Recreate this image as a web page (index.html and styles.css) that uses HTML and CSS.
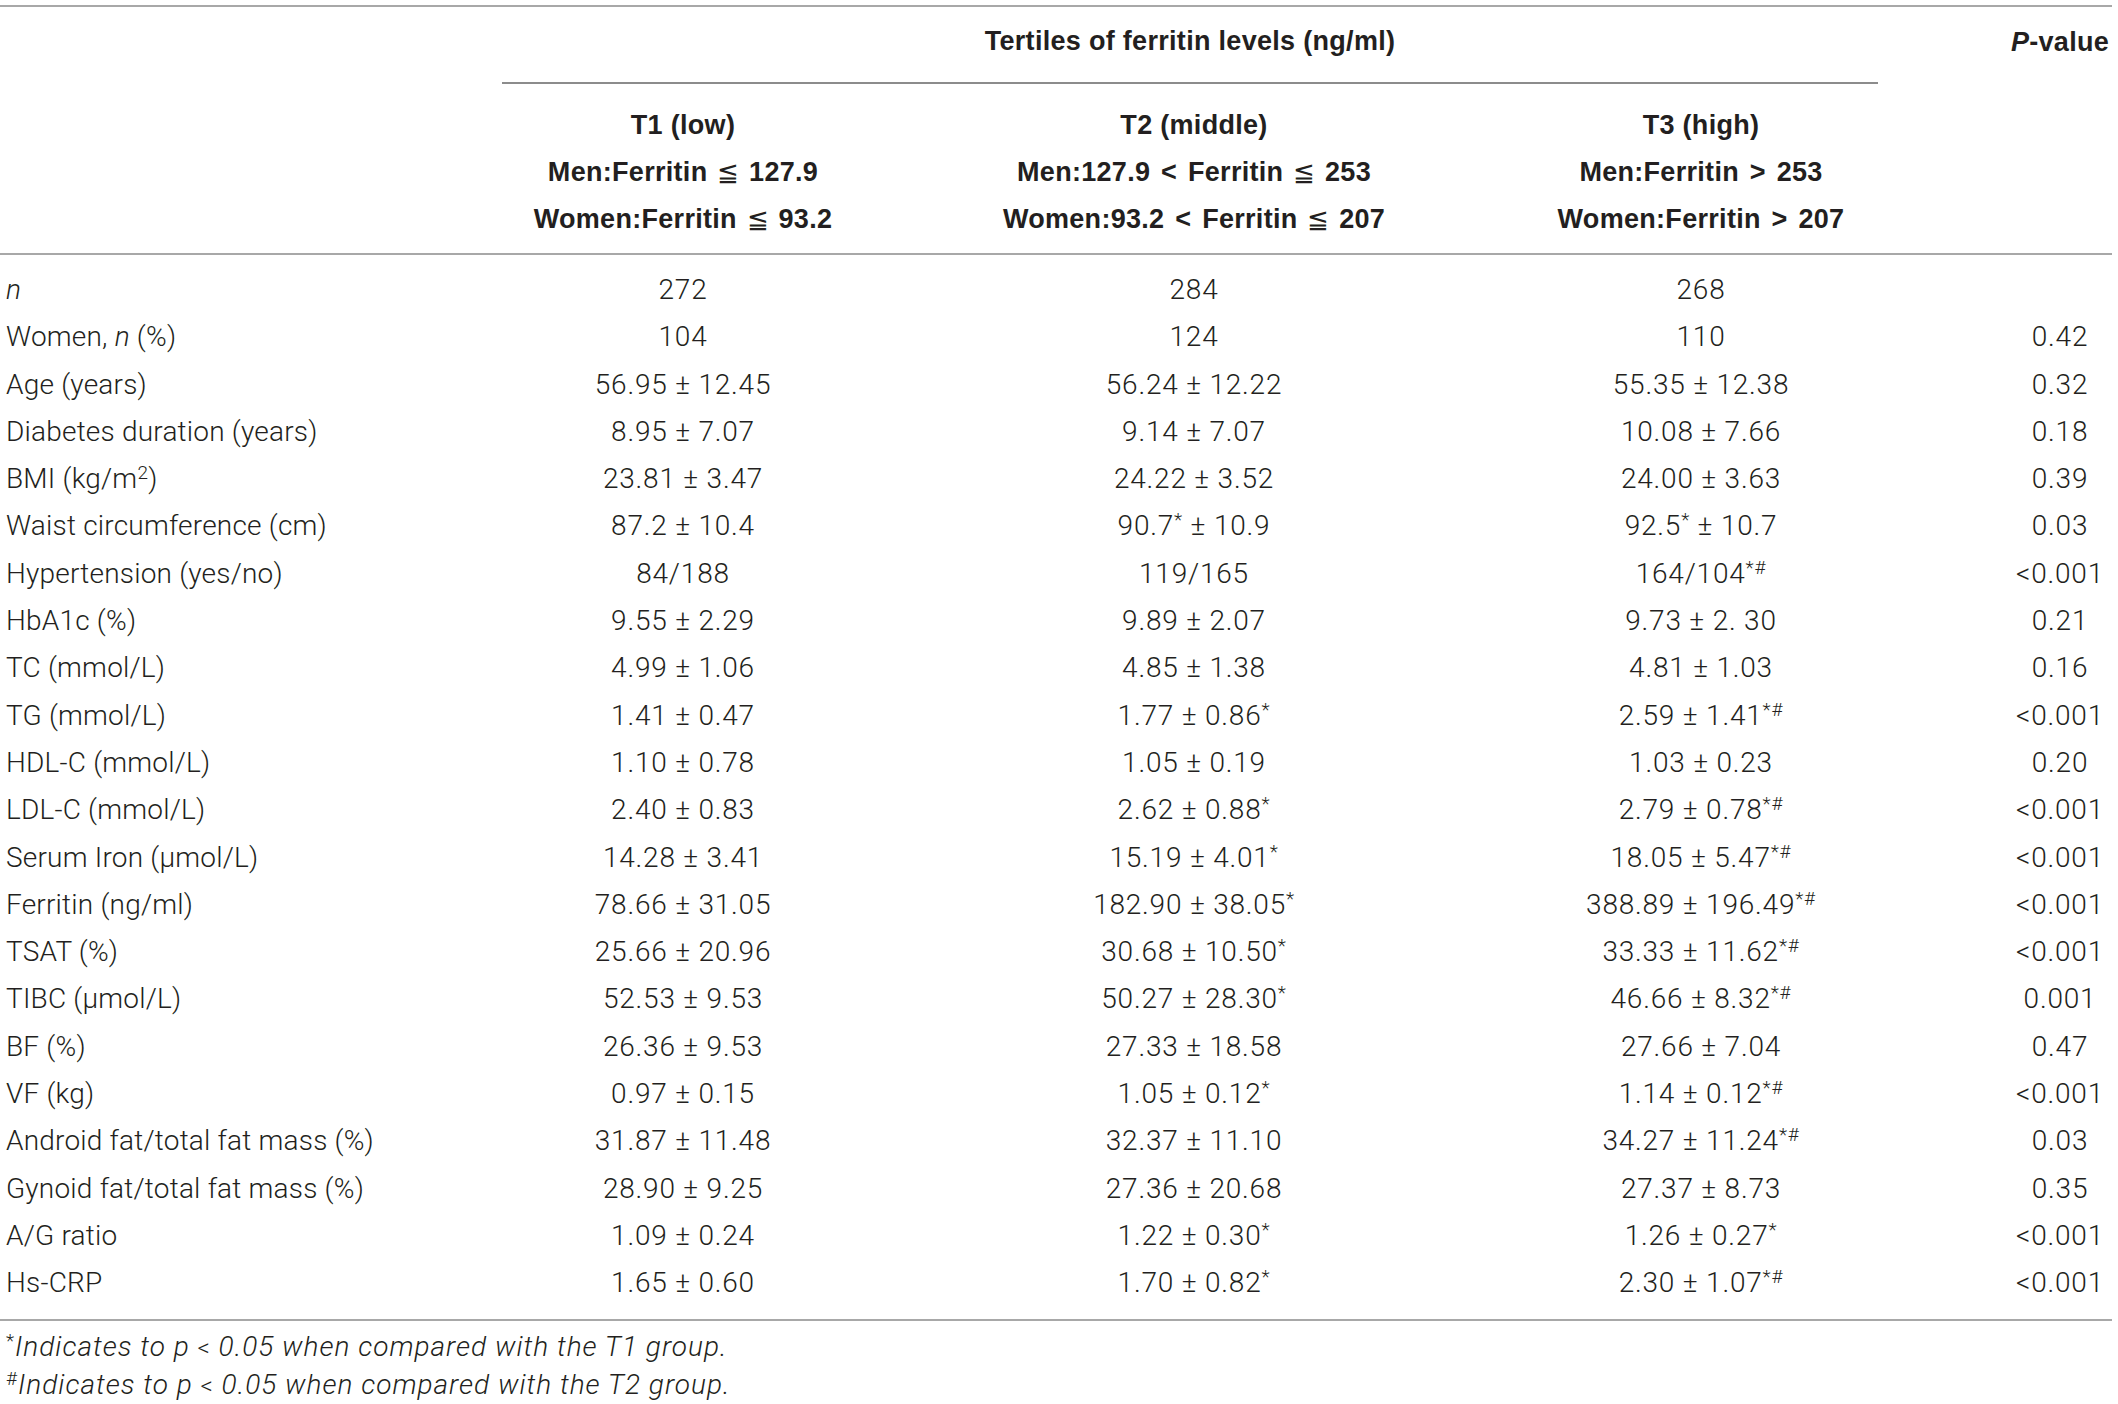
FILE: index.html
```html
<!DOCTYPE html>
<html lang="en">
  <head>
    <meta charset="UTF-8" />
    <title>Ferritin tertiles</title>
    <link rel="stylesheet" href="styles.css">
  </head>
  <body>
    <table class="data">
      <colgroup>
        <col class="c-label" />
        <col class="c-t1" />
        <col class="c-t2" />
        <col class="c-t3" />
        <col class="c-p" />
      </colgroup>
      <thead>
        <tr class="span-row">
          <th></th>
          <th colspan="3" class="spanner">Tertiles of ferritin levels (ng/ml)</th>
          <th class="p"><i>P</i>-value</th>
        </tr>
        <tr class="group-row">
          <th></th>
          <th>T1 (low)<br />Men:Ferritin <span class="sym">≦</span> 127.9<br />Women:Ferritin <span class="sym">≦</span> 93.2</th>
          <th>T2 (middle)<br />Men:127.9 <span class="op">&lt;</span> Ferritin <span class="sym">≦</span> 253<br />Women:93.2 <span class="op">&lt;</span> Ferritin <span class="sym">≦</span> 207</th>
          <th>T3 (high)<br />Men:Ferritin <span class="op">&gt;</span> 253<br />Women:Ferritin <span class="op">&gt;</span> 207</th>
          <th class="p"></th>
        </tr>
      </thead>
      <tbody>
        <tr><td><i>n</i></td><td>272</td><td>284</td><td>268</td><td class="p"></td></tr>
        <tr><td>Women, <i>n</i> (%)</td><td>104</td><td>124</td><td>110</td><td class="p">0.42</td></tr>
        <tr><td>Age (years)</td><td>56.95 ± 12.45</td><td>56.24 ± 12.22</td><td>55.35 ± 12.38</td><td class="p">0.32</td></tr>
        <tr><td>Diabetes duration (years)</td><td>8.95 ± 7.07</td><td>9.14 ± 7.07</td><td>10.08 ± 7.66</td><td class="p">0.18</td></tr>
        <tr><td>BMI (kg/m<sup>2</sup>)</td><td>23.81 ± 3.47</td><td>24.22 ± 3.52</td><td>24.00 ± 3.63</td><td class="p">0.39</td></tr>
        <tr><td>Waist circumference (cm)</td><td>87.2 ± 10.4</td><td>90.7<sup>*</sup> ± 10.9</td><td>92.5<sup>*</sup> ± 10.7</td><td class="p">0.03</td></tr>
        <tr><td>Hypertension (yes/no)</td><td>84/188</td><td>119/165</td><td>164/104<sup>*#</sup></td><td class="p">&lt;0.001</td></tr>
        <tr><td>HbA1c (%)</td><td>9.55 ± 2.29</td><td>9.89 ± 2.07</td><td>9.73 ± 2. 30</td><td class="p">0.21</td></tr>
        <tr><td>TC (mmol/L)</td><td>4.99 ± 1.06</td><td>4.85 ± 1.38</td><td>4.81 ± 1.03</td><td class="p">0.16</td></tr>
        <tr><td>TG (mmol/L)</td><td>1.41 ± 0.47</td><td>1.77 ± 0.86<sup>*</sup></td><td>2.59 ± 1.41<sup>*#</sup></td><td class="p">&lt;0.001</td></tr>
        <tr><td>HDL-C (mmol/L)</td><td>1.10 ± 0.78</td><td>1.05 ± 0.19</td><td>1.03 ± 0.23</td><td class="p">0.20</td></tr>
        <tr><td>LDL-C (mmol/L)</td><td>2.40 ± 0.83</td><td>2.62 ± 0.88<sup>*</sup></td><td>2.79 ± 0.78<sup>*#</sup></td><td class="p">&lt;0.001</td></tr>
        <tr><td>Serum Iron (μmol/L)</td><td>14.28 ± 3.41</td><td>15.19 ± 4.01<sup>*</sup></td><td>18.05 ± 5.47<sup>*#</sup></td><td class="p">&lt;0.001</td></tr>
        <tr><td>Ferritin (ng/ml)</td><td>78.66 ± 31.05</td><td>182.90 ± 38.05<sup>*</sup></td><td>388.89 ± 196.49<sup>*#</sup></td><td class="p">&lt;0.001</td></tr>
        <tr><td>TSAT (%)</td><td>25.66 ± 20.96</td><td>30.68 ± 10.50<sup>*</sup></td><td>33.33 ± 11.62<sup>*#</sup></td><td class="p">&lt;0.001</td></tr>
        <tr><td>TIBC (μmol/L)</td><td>52.53 ± 9.53</td><td>50.27 ± 28.30<sup>*</sup></td><td>46.66 ± 8.32<sup>*#</sup></td><td class="p">0.001</td></tr>
        <tr><td>BF (%)</td><td>26.36 ± 9.53</td><td>27.33 ± 18.58</td><td>27.66 ± 7.04</td><td class="p">0.47</td></tr>
        <tr><td>VF (kg)</td><td>0.97 ± 0.15</td><td>1.05 ± 0.12<sup>*</sup></td><td>1.14 ± 0.12<sup>*#</sup></td><td class="p">&lt;0.001</td></tr>
        <tr><td>Android fat/total fat mass (%)</td><td>31.87 ± 11.48</td><td>32.37 ± 11.10</td><td>34.27 ± 11.24<sup>*#</sup></td><td class="p">0.03</td></tr>
        <tr><td>Gynoid fat/total fat mass (%)</td><td>28.90 ± 9.25</td><td>27.36 ± 20.68</td><td>27.37 ± 8.73</td><td class="p">0.35</td></tr>
        <tr><td>A/G ratio</td><td>1.09 ± 0.24</td><td>1.22 ± 0.30<sup>*</sup></td><td>1.26 ± 0.27<sup>*</sup></td><td class="p">&lt;0.001</td></tr>
        <tr><td>Hs-CRP</td><td>1.65 ± 0.60</td><td>1.70 ± 0.82<sup>*</sup></td><td>2.30 ± 1.07<sup>*#</sup></td><td class="p">&lt;0.001</td></tr>
      </tbody>
    </table>

    <!-- Footnotes -->
    <div class="notes">
      <p><sup>*</sup>Indicates to p <span class="lt">&lt;</span> 0.05 when compared with the T1 group.</p>
      <p><sup>#</sup>Indicates to p <span class="lt">&lt;</span> 0.05 when compared with the T2 group.</p>
    </div>
  </body>
</html>
```

FILE: styles.css
```css
body {
  margin: 0;
  padding: 5px 6px 0 0;
  background-color: #fff;
  color: #231f20;
  font-family: Roboto, "Liberation Sans", Arial, sans-serif;
  font-weight: 300;
  font-size: 28px;
}
.data {
  width: 2112px;
  border-collapse: collapse;
  table-layout: fixed;
  border-top: 2px solid #a8a8a8;
  border-bottom: 2px solid #a8a8a8;
}
.c-label {
  width: 502px;
}
.c-t1 {
  width: 362px;
}
.c-t2 {
  width: 660px;
}
.c-t3 {
  width: 354px;
}
.c-p {
  width: 234px;
}
th,
td {
  padding: 0;
  text-align: center;
  white-space: nowrap;
}
th {
  font-family: "Liberation Sans", Arial, sans-serif;
  font-weight: 700;
  font-size: 27px;
  letter-spacing: 0.3px;
}
td {
  letter-spacing: 0.8px;
}
td:first-child {
  text-align: left;
  padding-left: 6px;
  letter-spacing: 0.2px;
}
.p {
  padding-left: 130px;
}
.span-row th {
  height: 77px;
  padding-bottom: 6px;
  box-sizing: border-box;
  vertical-align: middle;
}
.spanner {
  border-bottom: 2px solid #8c8c8c;
}
.group-row th {
  line-height: 47px;
  padding-top: 18px;
  padding-bottom: 10px;
  border-bottom: 2px solid #a8a8a8;
}
.op {
  margin: 0 3px;
}
.sym {
  font-family: "DejaVu Sans", sans-serif;
  font-weight: 300;
  font-size: 26px;
  letter-spacing: 0;
  margin: 0 2px;
}
tbody td {
  height: 47.3px;
  line-height: 47.3px;
}
tbody tr:first-child td {
  padding-top: 11px;
}
tbody tr:last-child td {
  padding-bottom: 12px;
}
sup {
  font-size: 19px;
  line-height: 0;
  vertical-align: 9px;
}
.notes {
  padding-left: 6px;
  padding-top: 7px;
  font-style: italic;
  letter-spacing: 1px;
}
.notes p {
  margin: 0;
  height: 38px;
  line-height: 38px;
}
.notes sup {
  font-style: normal;
}
.lt {
  font-style: normal;
  font-size: 24px;
}
```
